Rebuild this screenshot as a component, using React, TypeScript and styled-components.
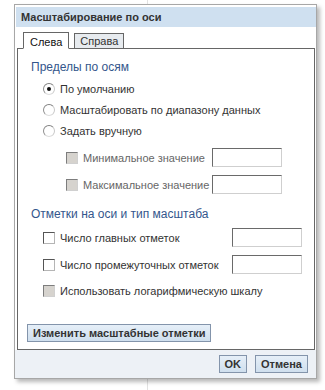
import React from "react";
import styled, { createGlobalStyle } from "styled-components";

const Global = createGlobalStyle`
  html, body {
    margin: 0;
    padding: 0;
    background: #fff linear-gradient(to right, transparent 147px, #e2e2e2 147px, #e2e2e2 148px, transparent 148px);
    font-family: "Liberation Sans", Arial, sans-serif;
    font-size: 11px;
    color: #333;
    min-height: 390px;
  }
`;

const Page = styled.div`
  padding: 4px 0 0 14px;
`;

const Dialog = styled.div`
  box-sizing: border-box;
  width: 303px;
  height: 375px;
  border: 1px solid #a7a7a7;
  background: #fff;
  box-shadow: 3px 3px 4px rgba(0, 0, 0, 0.28);
  display: flex;
  flex-direction: column;
`;

const TitleBar = styled.div`
  margin: 2px 0 0 1px;
  height: 20px;
  line-height: 20px;
  background: #cfe0f0;
  padding-left: 5px;
  color: #333;
  font-size: 11px;
  font-weight: bold;
`;

const Body = styled.div`
  padding: 5px 1px 0 2px;
`;

const Tabs = styled.div`
  display: flex;
  align-items: flex-end;
  gap: 5px;
  padding-left: 6px;
  height: 16px;
  position: relative;
  z-index: 1;
`;

const Tab = styled.div<{ $active?: boolean }>`
  box-sizing: border-box;
  height: ${(p) => (p.$active ? "17px" : "15px")};
  margin-bottom: ${(p) => (p.$active ? "-1px" : "0")};
  padding: 0 ${(p) => (p.$active ? "6px" : "5px")};
  border: 1px solid #666;
  border-bottom: ${(p) => (p.$active ? "1px solid #fff" : "none")};
  background: ${(p) => (p.$active ? "#fff" : "#e7ebef")};
  color: ${(p) => (p.$active ? "#111" : "#333")};
  line-height: ${(p) => (p.$active ? "18px" : "15px")};
  font-size: 11px;
`;

const Panel = styled.div`
  box-sizing: border-box;
  height: 302px;
  border: 1px solid #666;
  padding: 10px 9px 0 9px;
  display: flex;
  flex-direction: column;
`;

const Heading = styled.div<{ $top?: number }>`
  margin: ${(p) => p.$top ?? 0}px 0 0 4px;
  height: 16px;
  line-height: 16px;
  color: #34568c;
  font-size: 12px;
`;

const List = styled.div<{ $top: number; $indent: number }>`
  margin: ${(p) => p.$top}px 0 0 ${(p) => p.$indent}px;
  display: flex;
  flex-direction: column;
`;

const RadioRow = styled.div`
  display: flex;
  align-items: center;
  height: 21px;
  gap: 5px;
`;

const Radio = styled.span<{ $checked?: boolean }>`
  box-sizing: border-box;
  flex-shrink: 0;
  width: 12px;
  height: 12px;
  border-radius: 50%;
  border: 1px solid;
  border-color: #7f7f7f #c9c9c9 #dcdcdc #8f8f8f;
  background: #fff;
  display: flex;
  align-items: center;
  justify-content: center;
  &::after {
    content: "";
    display: ${(p) => (p.$checked ? "block" : "none")};
    width: 4px;
    height: 4px;
    border-radius: 50%;
    background: #111;
  }
`;

const FieldRow = styled.div<{ $label: number; $gap?: number }>`
  display: grid;
  grid-template-columns: ${(p) => p.$label}px auto;
  align-items: center;
  height: 23px;
  margin-bottom: ${(p) => p.$gap ?? 4}px;
`;

const CheckLabel = styled.label`
  display: flex;
  align-items: center;
  gap: 5px;
  height: 23px;
  white-space: nowrap;
`;

const Check = styled.span<{ $disabled?: boolean }>`
  box-sizing: border-box;
  flex-shrink: 0;
  width: 12px;
  height: 12px;
  border: 1px solid;
  border-color: ${(p) =>
    p.$disabled ? "#7d7d7d #d0d0d0 #d0d0d0 #7d7d7d" : "#555 #b5b5b5 #b5b5b5 #555"};
  background: ${(p) => (p.$disabled ? "#d6d3ce" : "#fff")};
`;

const Text = styled.span<{ $muted?: boolean }>`
  color: ${(p) => (p.$muted ? "#666" : "#333")};
  font-size: 11px;
`;

const Input = styled.div`
  box-sizing: border-box;
  width: 70px;
  height: 19px;
  border: 1px solid;
  border-color: #6a6a6a #cfcfcf #cfcfcf #6a6a6a;
  background: #fff;
`;

const Button = styled.button<{ $top?: number }>`
  box-sizing: border-box;
  height: 18px;
  margin-top: ${(p) => p.$top ?? 0}px;
  padding: 0 5px;
  border: 1px solid #8394ab;
  background: linear-gradient(#e6eff8, #cfdfee);
  color: #333;
  font-family: "Liberation Sans", Arial, sans-serif;
  font-size: 11px;
  font-weight: bold;
  line-height: 16px;
  align-self: flex-start;
  cursor: pointer;
`;

const Footer = styled.div`
  flex: 1;
  background: #edf1f6;
  display: flex;
  justify-content: flex-end;
  align-items: flex-start;
  gap: 8px;
  padding: 5px 8px 0 0;
`;

export default function App() {
  return (
    <>
      <Global />
      <Page>
        <Dialog>
          <TitleBar>Масштабирование по оси</TitleBar>
          <Body>
            <Tabs>
              <Tab $active>Слева</Tab>
              <Tab>Справа</Tab>
            </Tabs>
            <Panel>
              <Heading>Пределы по осям</Heading>
              <List $top={3} $indent={16}>
                <RadioRow>
                  <Radio $checked />
                  <Text>По умолчанию</Text>
                </RadioRow>
                <RadioRow>
                  <Radio />
                  <Text>Масштабировать по диапазону данных</Text>
                </RadioRow>
                <RadioRow>
                  <Radio />
                  <Text>Задать вручную</Text>
                </RadioRow>
              </List>
              <List $top={5} $indent={39}>
                <FieldRow $label={146}>
                  <CheckLabel>
                    <Check $disabled />
                    <Text $muted>Минимальное значение</Text>
                  </CheckLabel>
                  <Input />
                </FieldRow>
                <FieldRow $label={146} $gap={0}>
                  <CheckLabel>
                    <Check $disabled />
                    <Text $muted>Максимальное значение</Text>
                  </CheckLabel>
                  <Input />
                </FieldRow>
              </List>
              <Heading $top={10}>Отметки на оси и тип масштаба</Heading>
              <List $top={4} $indent={16}>
                <FieldRow $label={189}>
                  <CheckLabel>
                    <Check />
                    <Text>Число главных отметок</Text>
                  </CheckLabel>
                  <Input />
                </FieldRow>
                <FieldRow $label={189} $gap={3}>
                  <CheckLabel>
                    <Check />
                    <Text>Число промежуточных отметок</Text>
                  </CheckLabel>
                  <Input />
                </FieldRow>
                <CheckLabel>
                  <Check $disabled />
                  <Text>Использовать логарифмическую шкалу</Text>
                </CheckLabel>
              </List>
              <Button $top={22}>Изменить масштабные отметки</Button>
            </Panel>
          </Body>
          <Footer>
            <Button>OK</Button>
            <Button>Отмена</Button>
          </Footer>
        </Dialog>
      </Page>
    </>
  );
}
